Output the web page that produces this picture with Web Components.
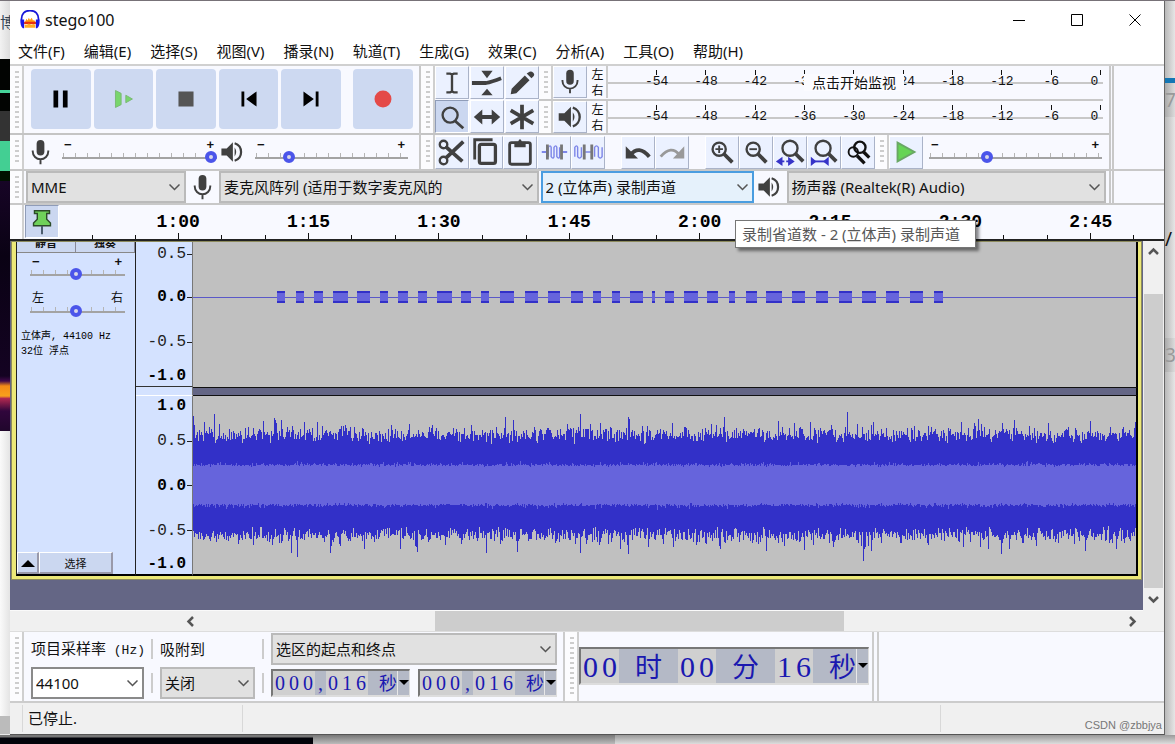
<!DOCTYPE html>
<html lang="zh-CN">
<head>
<meta charset="utf-8">
<title>stego100</title>
<style>
html,body{margin:0;height:100%}
body{font-family:"Noto Sans","Noto Sans CJK SC",sans-serif;font-size:15px;line-height:20px;color:#111}
</style>
</head>
<body>
<au-desktop>
  <au-window>
    <title-bar>stego100</title-bar>
    <menu-bar></menu-bar>
    <tool-dock></tool-dock>
    <time-ruler></time-ruler>
    <track-area></track-area>
    <selection-bar></selection-bar>
    <status-bar></status-bar>
  </au-window>
</au-desktop>
<script>
const define = (name, css, html, after) => {
  const t = document.createElement('template');
  t.innerHTML = `<style>*{box-sizing:border-box}:host{box-sizing:border-box}${css}</style>` + (typeof html === 'string' ? html : '');
  customElements.define(name, class extends HTMLElement {
    connectedCallback() {
      if (this.shadowRoot) return;
      const root = this.attachShadow({mode: 'open'});
      root.append(t.content.cloneNode(true));
      if (typeof html === 'function') {
        const f = document.createElement('template');
        f.innerHTML = html(this);
        root.append(f.content.cloneNode(true));
      }
      if (after) after(this, root);
    }
  });
};

/* Icons, drawn in a 34 x 34 box */
const D = '#404040';
const mic = `<rect x="13" y="4" width="8" height="16" rx="4" fill="${D}"/><path d="M9 15v1a8 8 0 0 0 16 0v-1M17 24v5" fill="none" stroke="${D}" stroke-width="2"/>`;
const speaker = `<path d="M5 13h6l7-7v22l-7-7H5z" fill="${D}"/><path d="M20 12q3.500 5 0 10z" fill="${D}"/><path d="M20 7a10.500 10.500 0 0 1 0 20" fill="none" stroke="${D}" stroke-width="2.500"/>`;
const lens = (x, y, r) => `<circle cx="${x}" cy="${y}" r="${r}" fill="none" stroke="${D}" stroke-width="2.500"/><path d="M${x + r * .7} ${y + r * .7}L${x + 14} ${y + 14}" stroke="${D}" stroke-width="4"/>`;
const ICONS = {
  pause: `<path d="M9 8h5v18H9zM19 8h5v18h-5z" fill="#000"/>`,
  play: `<path d="M9 8l6 3v12l-6 3z" fill="#78d66c" stroke="#7ab874"/><path d="M20 13l7 4-7 4z" fill="#78d66c" stroke="#7ab874"/>`,
  stop: `<path d="M9 9h16v16H9z" fill="#555"/>`,
  start: `<path d="M9 9h3v16H9zM25 9v16L14 17z" fill="#000"/>`,
  end: `<path d="M22 9h3v16h-3zM9 9v16l11-8z" fill="#000"/>`,
  record: `<circle cx="17" cy="17" r="9" fill="#e44a48"/>`,
  ibeam: `<path d="M11 7h4l2 1 2-1h4M11 27h4l2-1 2 1h4M17 8v18" fill="none" stroke="${D}" stroke-width="2.500"/>`,
  envelope: `<path d="M11 4h12l-6 8zM11 30h12l-6-7z" fill="${D}"/><path d="M1 17h15q6-1 16-5" fill="none" stroke="${D}" stroke-width="4"/>`,
  draw: `<path d="M5 29l1-6L20 9l5 5-14 14zM22 7l3-2q2-1 4 1t0 4l-2 2z" fill="${D}"/>`,
  zoom: `<circle cx="15" cy="15" r="8" fill="none" stroke="${D}" stroke-width="2.500"/><path d="M20 21l9 8" stroke="${D}" stroke-width="3"/>`,
  shift: `<path d="M3 17l9-8v6h10V9l9 8-9 8v-6H12v6z" fill="${D}"/>`,
  multi: `<path d="M17 4v26M5 10l24 14M29 10L5 24" stroke="${D}" stroke-width="4"/>`,
  mic, speaker,
  cut: `<circle cx="8" cy="9" r="4" fill="none" stroke="${D}" stroke-width="2.500"/><circle cx="8" cy="26" r="4" fill="none" stroke="${D}" stroke-width="2.500"/><path d="M10 11l18 16M11 23L29 6" stroke="${D}" stroke-width="4"/>`,
  copy: `<path d="M5 25V4h19" fill="none" stroke="${D}" stroke-width="3"/><rect x="10" y="9" width="17" height="20" rx="2" fill="none" stroke="${D}" stroke-width="3.500"/>`,
  paste: `<rect x="6" y="7" width="22" height="23" rx="2" fill="none" stroke="${D}" stroke-width="3"/><path d="M11 6h4q2-5 4 0h4v6H11z" fill="${D}"/>`,
  trim: `<path d="M4 17h6M25 17h6" stroke="#7d86e8" stroke-width="2"/><path d="M11 22V12q2-3 3 0v10q2 3 3 0V12q2-3 3 0v10q2 3 3 0V12" fill="none" stroke="#7d86e8" stroke-width="1.500"/><path d="M10 9v16M25 9v16" stroke="#777" stroke-width="3"/>`,
  silence: `<path d="M3 22V12q2-3 3 0v10q2 3 4 0V12M14 17h7M24 22V12q2-3 4 0v10q2 3 4 0V12" fill="none" stroke="#7d86e8" stroke-width="1.500"/><path d="M13 9v16M21 9v16" stroke="#777" stroke-width="3"/>`,
  undo: `<path d="M9 20Q18 9 29 22" fill="none" stroke="${D}" stroke-width="4"/><path d="M4 11v13h13z" fill="${D}"/>`,
  redo: `<path d="M5 22Q16 9 25 20" fill="none" stroke="#999" stroke-width="3"/><path d="M30 11v13H18z" fill="#999"/>`,
  zoomin: lens(14, 14, 7) + `<path d="M10 14h8M14 10v8" stroke="${D}" stroke-width="2"/>`,
  zoomout: lens(14, 14, 7) + `<path d="M10 14h8" stroke="${D}" stroke-width="2"/>`,
  fitsel: lens(17, 13, 8) + `<path d="M2 27l7-5v4h6v-4l7 5-7 5v-4H9v4z" fill="#3734c8"/><path d="M12 22v10" stroke="#eaf0ff" stroke-width="2"/>`,
  fitproj: lens(16, 13, 8) + `<path d="M4 27h16" stroke="#3734c8" stroke-width="2"/><path d="M3 22v10l6-5zM22 22v10l-6-5z" fill="#3734c8"/>`,
  toggle: `<circle cx="19" cy="12" r="6" fill="none" stroke="#111" stroke-width="2.500"/><circle cx="12" cy="17" r="5" fill="none" stroke="#111" stroke-width="2"/><path d="M23 17l6 6M16 21l8 8" stroke="#111" stroke-width="3.500"/>`,
  playat: `<path d="M8 7l18 10L8 27z" fill="#66d455" stroke="#69a765" stroke-width="2"/>`,
  pin: `<path d="M9 5h16v3h-3v6l4 4v3H8v-3l4-4V8H9z" fill="#6fd05a" stroke="#2c4a28" stroke-width="1.500"/><path d="M17 21v9" stroke="#456" stroke-width="2"/>`,
  logo: `<path d="M3 22C0 4 10 1 17 1s17 3 14 21" fill="none" stroke="#1717d8" stroke-width="3"/><path d="M7 24l4-9 2 3 2-5 2 4 3-4 2 5 2-1 4 7z" fill="#ff9b10"/><path d="M7 20h20v4H7z" fill="#e83010"/><path d="M8 30h18v-5l-3-1-4 1-4-2-3 2-4 0z" fill="#ffad22"/><path d="M1 16h6v15H5q-5-3-4-15zM33 16h-6v15h2q5-3 4-15z" fill="#1717e8"/>`
};
define('au-icon', `:host{display:block;width:34px;height:34px;flex:none}svg{display:block;width:100%;height:100%}`,
  el => `<svg viewBox="0 0 34 34" aria-hidden="true">${ICONS[el.getAttribute('name')]}</svg>`);

define('tool-grip', `:host{display:block;width:14px;flex:none;align-self:stretch;background:#fcfcfe;border-right:2px solid #cfcfcf;padding:5px 3px 5px 5px}
  i{display:block;height:100%;background:repeating-linear-gradient(#cdcdcd 0 2px,transparent 2px 5px)}`, `<i></i>`);

define('tool-button', `:host{display:block;width:34px;height:34px;flex:none}
  button{width:100%;height:100%;padding:0;border:1px solid #fff;border-right-color:#aab3c8;border-bottom-color:#aab3c8;background:#ebf1ff;display:flex;align-items:center;justify-content:center;overflow:hidden}
  au-icon{width:32px;height:32px}
  :host([on]) button{background:#cbd7f0;border-color:#8f9cb8 #fff #fff #8f9cb8}
  :host([big]){width:auto;flex:1;height:60px}:host([big]) button{background:#cdd9f1;border:0;border-radius:4px}`,
  el => `<button type="button" aria-label="${el.getAttribute('icon')}"><au-icon name="${el.getAttribute('icon')}"></au-icon></button>`);

define('au-slider', `:host{display:flex;flex-direction:column}
  div{display:flex;justify-content:space-between;font:bold 13px/12px "Liberation Sans","Noto Sans CJK SC",sans-serif;padding:0 3px 0 2px;height:12px}
  :host([cjk]) div{font:12px/12px "Noto Sans CJK SC",sans-serif;padding:0 2px;height:14px}
  input{appearance:none;-webkit-appearance:none;width:100%;height:12px;margin:0;background:
   linear-gradient(#a3a3a3,#a3a3a3) 0 6px/100% 2px no-repeat,
   repeating-linear-gradient(90deg,#b5b5b5 0 1px,transparent 1px 12px) 1px 2px/100% 5px no-repeat}
  input::-webkit-slider-thumb{-webkit-appearance:none;width:12px;height:12px;border-radius:50%;border:4px solid #4b55ea;background:#d8d8e8}`,
  el => `<div><span>${el.getAttribute('lo') || '−'}</span><span>${el.getAttribute('hi') || '+'}</span></div><input type="range" aria-label="${el.getAttribute('label')}" value="${el.getAttribute('value')}">`);

define('au-combo', `:host{display:block;position:relative;height:32px}
  select{appearance:none;-webkit-appearance:none;width:100%;height:100%;border:2px solid #bababa;border-radius:0;background:#e1e1e1;font:inherit;color:#111;padding:0 20px 1px 3px;overflow:hidden}
  svg{position:absolute;right:6px;top:50%;margin-top:-3px;width:11px;height:7px;pointer-events:none}
  :host([hot]) select{background:#e5f1fb;border-color:#4a9de0}
  :host([white]) select{background:#fff;border-color:#8a8a8a}`,
  el => `<select aria-label="${el.getAttribute('label')}"><option>${el.getAttribute('value')}</option></select><svg viewBox="0 0 11 7"><path d="M.5.500l5 5 5-5" fill="none" stroke="#555" stroke-width="1.500"/></svg>`);

define('au-desktop', `:host{display:grid;min-height:100vh;grid-template:1px 1fr 9px/10px minmax(0,1fr) 10px;background:#e9e9e9;overflow:hidden}
  .top{grid-column:1/4;background:#777278}
  .left,.right{overflow:hidden;display:flex;flex-direction:column;white-space:nowrap}
  .left i,.right i{display:block;flex:none}
  .left span{height:58px;flex:none;background:linear-gradient(90deg,#f2f2f2,#ddd);color:#345;padding-top:11px;line-height:20px}
  .spec{height:250px;background:linear-gradient(#170526,#0a0214 30%,#140322 78%,#40084a 80%,#f58b16 82%,#f8a01c 86%,#b02850 87%,#30063c 92%,#20062c)}
  .right{background:linear-gradient(90deg,#b9b9b9,#e6e6e6)}
  .right span{flex:none;color:#999;font-size:19px;line-height:34px;height:34px;background:linear-gradient(90deg,#aaa,#dcdcdc)}
  .bottom{grid-column:1/4;display:flex}
  .bottom i{display:block}
  .b1{width:313px;background:linear-gradient(#777 2px,#02030a 3px)}.b2{width:302px;background:linear-gradient(#777,#bbb)}.b3{flex:1;background:linear-gradient(#999,#ddd)}`,
  `<div class="top"></div>
   <div class="left"><span>博</span><i style="height:31px;background:#020402"></i><i style="height:3px;background:#46d49a"></i><i style="height:18px;background:#020402"></i><i style="height:30px;background:#333"></i><i style="height:30px;background:#43cf93"></i><i style="height:10px;background:#010"></i><i class="spec"></i><i style="height:285px;background:linear-gradient(90deg,#fafafa,#e4e4e4)"></i><i style="height:18px;background:#bbb"></i></div>
   <slot></slot>
   <div class="right"><i style="height:77px"></i><i style="height:5px;background:#1376b4"></i><span>7</span><i style="height:105px"></i><span style="background:none;color:#111">/</span><i style="height:82px"></i><span>38</span></div>
   <div class="bottom"><i class="b1"></i><i class="b2"></i><i class="b3"></i></div>`);

define('au-window', `:host{display:flex;flex-direction:column;min-width:0;background:#f8f9ff;border-right:1px solid #666;border-bottom:1px solid #555}`, `<slot></slot>`);

define('title-bar', `:host{display:flex;height:38px;background:#fff;align-items:center;font-size:16px;padding-left:10px}
  au-icon{width:20px;height:20px}.t{flex:1;padding-left:5px}
  button{width:58px;height:38px;border:0;background:none;padding:0;display:grid;place-items:center}svg{display:block}`,
  `<au-icon name="logo"></au-icon><span class="t"><slot></slot></span>
   <button aria-label="最小化"><svg width="14" height="14"><path d="M1 7.500h12" stroke="#000"/></svg></button>
   <button aria-label="最大化"><svg width="14" height="14"><path d="M1.500 1.500h11v11h-11z" fill="none" stroke="#000"/></svg></button>
   <button aria-label="关闭"><svg width="14" height="14"><path d="M1.500 1.500l11 11M12.500 1.500l-11 11" stroke="#000"/></svg></button>`);

define('menu-bar', `:host{display:flex;height:25px;background:#fff;padding:0 0 2px 8px;gap:19px;align-items:center}
  a{color:#111;text-decoration:none;line-height:22px;white-space:nowrap}`,
  () => '文件(F) 编辑(E) 选择(S) 视图(V) 播录(N) 轨道(T) 生成(G) 效果(C) 分析(A) 工具(O) 帮助(H)'.split(' ').map(m => `<a href="#">${m}</a>`).join(''));

define('level-meter', `:host{display:flex;height:32px;min-width:0;align-items:stretch}
  tool-button{margin-right:2px;height:32px}
  .lr{width:17px;font:12px/16px "Noto Sans CJK SC",sans-serif;text-align:center}
  .lr div{height:16px}
  .scale{position:relative;flex:1;min-width:0;border-left:2px solid #ccc;display:flex;
    background:linear-gradient(#c8c8c8,#c8c8c8) 0 16px/100% 2px no-repeat;padding:4px 2px 0 24px}
  .scale span{flex:1;text-align:center;font:13px/14px "Liberation Mono",monospace;min-width:0;
    background:linear-gradient(#111,#111) 50% 0/1px 5px no-repeat;padding-top:5px}
  .scale span:last-of-type{flex:0 0 13px;margin-left:12px;background-position:right 0}
  button{position:absolute;left:calc(40% - 2px);top:8px;height:17px;width:100px;padding:0;border:0;background:#fbfbff;font:14px/17px "Noto Sans CJK SC",sans-serif;color:#111}`,
  el => `<tool-button icon="${el.getAttribute('icon')}"></tool-button><div class="lr"><div>左</div><div>右</div></div><div class="scale">${[-54,-48,-42,-36,-30,-24,-18,-12,-6,0].map(n => `<span>${n}</span>`).join('')}${el.hasAttribute('idle') ? '<button>点击开始监视</button>' : ''}</div>`);

const btn = names => names.split(' ').map(n => `<tool-button icon="${n}"></tool-button>`).join('');
define('tool-dock', `:host{display:block;border-top:2px solid #d0d0d0}
  .top{display:flex}
  .left{width:411px;flex:none;border-right:2px solid #c8c8c8}
  .row{display:flex}
  .transport{height:69px;border-bottom:2px solid #c4c4c4}
  .keys{display:flex;gap:3px;width:310px;margin:3px 0 0 7px}
  .rec{display:flex;width:60px;margin:3px 0 0 12px}
  .mixer{height:34px;align-items:center}
  .mic{width:33px;height:33px}
  .spk{width:30px;height:30px}
  .mixer au-slider{margin-bottom:2px}
  .right{flex:1;min-width:0;display:flex}
  .main{flex:1;min-width:0;max-width:800px}
  .up{display:flex;height:69px;border-bottom:2px solid #c4c4c4}
  .tools{display:grid;grid-template-columns:repeat(3,34px);grid-auto-rows:33px;gap:1px;flex:none}
  .tools tool-button{height:33px}
  .meters{flex:1;min-width:0;margin:0 6px 0 0}
  .meters>div{display:flex;height:33px}
  .meters>div+div{border-top:2px solid #c8c8c8;height:34px}
  .meters level-meter{flex:1}
  .edit{display:flex;height:34px;align-items:center}
  .edit tool-button{height:33px}
  .gap{width:16px}
  .dev{display:flex;height:36px;border-top:2px solid #c8c8c8;border-bottom:2px solid #c8c8c8;align-items:center}
  .end{border-left:2px solid #c8c8c8;border-right:2px solid #c8c8c8;width:5px;align-self:stretch;flex:none}
  .blank{width:50px;flex:none}`,
  `<div class="top"><div class="left">
    <div class="row transport"><tool-grip></tool-grip><div class="keys">
     ${['pause','play','stop','start','end'].map(n => `<tool-button big icon="${n}"></tool-button>`).join('')}</div>
     <div class="rec"><tool-button big icon="record"></tool-button></div></div>
    <div class="row mixer"><tool-grip></tool-grip><au-icon class="mic" name="mic" style="margin-right:5px"></au-icon>
     <au-slider label="录音音量" value="100" style="width:155px"></au-slider><au-icon class="spk" name="speaker" style="margin-right:8px"></au-icon>
     <au-slider label="播放音量" value="20" style="width:153px"></au-slider></div>
   </div>
   <div class="right"><div class="main">
    <div class="up"><tool-grip></tool-grip><div class="tools">
      <tool-button icon="ibeam"></tool-button><tool-button icon="envelope"></tool-button><tool-button icon="draw"></tool-button>
      <tool-button icon="zoom" on></tool-button><tool-button icon="shift"></tool-button><tool-button icon="multi"></tool-button></div>
      <div class="meters"><div><tool-grip></tool-grip><level-meter icon="mic" idle></level-meter></div>
      <div><tool-grip></tool-grip><level-meter icon="speaker"></level-meter></div></div></div>
    <div class="edit"><tool-grip></tool-grip>${btn('cut copy paste trim silence')}<span class="gap"></span>${btn('undo redo')}<span class="gap"></span>${btn('zoomin zoomout fitsel fitproj toggle')}
      <tool-grip></tool-grip>${btn('playat')}<au-slider label="播放速度" value="32" style="width:173px;margin:0 0 2px 6px"></au-slider></div>
   </div><span class="end" style="margin-left:auto"></span><span class="blank"></span></div></div>
   <div class="dev"><tool-grip></tool-grip>
    <au-combo label="音频主机" value="MME" style="width:160px;margin-left:2px"></au-combo><au-icon class="mic" name="mic"></au-icon>
    <au-combo label="录制设备" value="麦克风阵列 (适用于数字麦克风的" style="flex:1"></au-combo>
    <au-combo hot label="录制声道" value="2 (立体声) 录制声道" style="width:213px;margin-left:2px"></au-combo><au-icon class="spk" name="speaker" style="margin-right:3px"></au-icon>
    <au-combo label="播放设备" value="扬声器 (Realtek(R) Audio)" style="flex:1;margin-right:3px"></au-combo>
    <span class="end"></span><span class="blank"></span></div>`);

define('time-ruler', `:host{display:flex;height:36px;position:relative;border-bottom:2px solid #222}
  .stub{width:14px;border-right:2px solid #d0d0d0;background:#fcfcfe}
  tool-button{margin-left:1px;height:33px}
  .lead{width:54px;background:linear-gradient(#111,#111) 33px 100%/1px 4px no-repeat}
  ol{flex:1;display:flex;margin:0 8px 0 0;padding:0;list-style:none}
  li{flex:1;text-align:center;font:bold 18px/34px "Liberation Mono",monospace;color:#000;
   background:linear-gradient(#111,#111) 50% 100%/1px 6px no-repeat,linear-gradient(#111,#111) 16.667% 100%/1px 4px no-repeat,linear-gradient(#111,#111) 83.333% 100%/1px 4px no-repeat}
  .tip{position:absolute;left:725px;top:15px;z-index:5;border:1px solid #767676;background:#fff;color:#575757;padding:1px 6px;min-width:241px;line-height:24px;box-shadow:3px 3px 3px #0007;white-space:nowrap}`,
  `<span class="stub"></span><tool-button icon="pin" on></tool-button><span class="lead"></span>
   <ol>${['1:00','1:15','1:30','1:45','2:00','2:15','2:30','2:45'].map(t => `<li>${t}</li>`).join('')}</ol>
   <div class="tip" role="tooltip">录制省道数 - 2 (立体声) 录制声道</div>`);

/* Amplitude scale: "rows" are the grid rows, the labels stand in the even ones */
define('amp-scale', `:host{display:grid;background:#d4e2ff;font:16px/20px "Liberation Mono",monospace;color:#222;border-bottom:1px solid #333}
  div{display:flex;justify-content:flex-end;align-items:center;gap:1px;height:20px}
  div::after{content:"";width:5px;height:1px;background:#222}
  .b{font-weight:bold;color:#000}.e::after{background:none}`,
  el => el.getAttribute('labels').split(' ').map((l, i) => `<div style="grid-row:${2 * i + 2}" class="${/^-?[01]\.0$/.test(l) ? 'b' : ''} ${/1\.0/.test(l) ? 'e' : ''}">${l}</div>`).join(''),
  el => { el.style.gridTemplateRows = el.getAttribute('rows'); });

/* Pseudo-random noise with a fixed seed, so that each drawing is the same */
const noise = seed => () => (seed = (seed * 1664525 + 1013904223) >>> 0) / 4294967296;
function noisePath(base, jitter, spike, seed, peaks) {
  const r = noise(seed);
  const up = [], down = [];
  for (let x = 0; x < 944; x++) {
    const v = () => base + (r() + r() - 1) * jitter + (r() < .13 ? r() * spike : 0);
    up.push(peaks && peaks.up[x] || v());
    down.push(peaks && peaks.down[x] || v());
  }
  let d = `M0 ${Math.round(89 - up[0])}`;
  up.forEach((v, x) => d += `V${Math.round(89 - v)}H${x + 1}`);
  for (let x = 943; x >= 0; x--) d += `V${Math.round(89 + down[x])}H${x}`;
  return d + 'z';
}
const BEEPS = [[277,8],[296,8],[314,9],[333,15],[357,13],[380,8],[398,10],[418,9],[437,15],[461,10],[481,8],[500,14],[525,13],[548,12],[571,12],[593,8],[612,8],[630,13],[652,3],[665,10],[685,14],[708,11],[730,6],[747,11],[767,16],[793,13],[817,12],[840,13],[863,14],[887,13],[911,13],[935,9]];
define('wave-channel', `:host{display:block;background:#c0c0c0;min-height:0}svg{display:block;width:100%;height:100%}`,
  el => el.getAttribute('kind') === 'beeps'
    ? `<svg viewBox="0 0 944 146" preserveAspectRatio="none" shape-rendering="crispEdges"><path d="M0 56h944v1H0z" fill="#5a58c8"/>${BEEPS.map(([x, w]) => `<path d="M${x - 193} 50h${w}v12h-${w}z" fill="#3230c8"/><path d="M${x - 193} 52h${w}v8h-${w}z" fill="#6664dc"/>`).join('')}</svg>`
    : `<svg viewBox="0 0 944 178" preserveAspectRatio="none" shape-rendering="crispEdges"><path fill="#3230c8" d="${noisePath(50, 9, 14, 77, {up: {0: 69, 1: 60, 81: 67, 82: 65, 83: 62, 435: 68, 436: 66, 655: 73, 898: 64}, down: {671: 76, 672: 64, 324: 67, 207: 64}})}"/><path fill="#6664dc" d="${noisePath(20, 2, 3, 9)}"/></svg>`);

define('au-scroll', `:host{display:flex;background:#f0f0f0;align-items:center}
  :host([vertical]){flex-direction:column;width:21px}
  button{border:0;padding:0;background:none;width:21px;height:21px;flex:none;display:grid;place-items:center}
  svg{display:block}
  .r{flex:1;display:flex;align-self:stretch;min-height:0}
  :host([vertical]) .r{flex-direction:column;padding:0 1px}
  i{background:#cdcdcd;display:block}`,
  el => {
    const v = el.hasAttribute('vertical');
    const [a, b, c] = el.getAttribute('parts').split(' ');
    const arrow = p => `<button aria-label="滚动"><svg width="11" height="11"><path d="${p}" fill="none" stroke="#555" stroke-width="2.500"/></svg></button>`;
    return arrow(v ? 'M1 8l4.500-4.500L10 8' : 'M8 1L3.500 5.500 8 10') + `<div class="r"><span style="flex:${a}"></span><i style="flex:${b}"></i><span style="flex:${c}"></span></div>` + arrow(v ? 'M1 3l4.500 4.500L10 3' : 'M3 1l4.500 4.500L3 10');
  });

define('track-panel', `:host{display:flex;flex-direction:column;background:#d4e2ff;border-right:1px solid #222}
  .mute{display:flex;height:12px;flex:none;overflow:hidden;align-items:flex-end;border-bottom:1px solid #888}
  .mute button{flex:1;height:20px;border:0;border-right:1px solid #889;background:#cbd7f0;padding:0;font:bold 11px/14px "Noto Sans CJK SC",sans-serif;color:#111}
  au-slider{width:95px;margin:3px 0 0 13px}
  au-slider+au-slider{margin-top:11px}
  p{margin:12px 4px 0;font:10px/15px "Liberation Mono","Noto Sans CJK SC",monospace;color:#000;white-space:nowrap}
  .foot{margin-top:auto;display:flex;height:22px}
  .foot button{height:22px;border:1px solid #fff;border-right:2px solid #99a;border-bottom:2px solid #99a;background:#cbd7f0;padding:0;width:74px;font:11px/16px "Noto Sans CJK SC",sans-serif;color:#111}
  .foot button:first-child{width:22px;display:grid;place-items:center}`,
  `<div class="mute"><button>静音</button><button>独奏</button></div>
   <au-slider label="增益" value="48"></au-slider><au-slider cjk label="声像" lo="左" hi="右" value="48"></au-slider>
   <p>立体声, 44100 Hz<br>32位 浮点</p>
   <div class="foot"><button aria-label="折叠"><svg width="14" height="8"><path d="M0 8l7-7 7 7z"/></svg></button><button>选择</button></div>`);

define('track-area', `:host{flex:1;min-height:0;display:grid;grid-template:minmax(0,1fr) 22px/minmax(0,1fr) 21px}
  .canvas{background:#646685;padding-bottom:30px;display:flex}
  .track{flex:1;min-width:0;display:grid;grid-template:146px 9px minmax(0,1fr)/120px 57px minmax(0,1fr);border:solid #ece878;border-width:0 4px 4px 5px;outline:1px solid #8c8a5c;outline-offset:-1px;margin:0 1px 0 1px}
  track-panel{grid-row:1/4}
  .sep1{background:#d4e2ff;border-bottom:1px solid #fff}
  .sep2{background:#646685;border:solid #111;border-width:1px 0}
  .track>*{min-width:0;min-height:0}
  wave-channel,.sep2{border-right:2px solid #000}
  wave-channel.last,amp-scale.last,track-panel{border-bottom:2px solid #000}
  track-panel{border-left:1px solid #222}
  .sc{border-right:1px solid #777}
  .hs{padding-left:170px;background:#f0f0f0;display:flex;border-top:1px solid #fafafa;border-bottom:1px solid #ddd}
  .hs au-scroll{flex:1}
  .corner{background:#f0f0f0;border-bottom:1px solid #ddd}`,
  `<div class="canvas"><div class="track">
     <track-panel></track-panel>
     <amp-scale class="sc" rows="3fr 20px 23fr 20px 25fr 20px 14fr 20px" labels="0.5 0.0 -0.5 -1.0"></amp-scale>
     <wave-channel kind="beeps"></wave-channel>
     <div class="sep1 sc"></div><div class="sep2"></div>
     <amp-scale class="sc last" rows="0 20px 15fr 20px 24fr 20px 25fr 20px 13fr 20px" labels="1.0 0.5 0.0 -0.5 -1.0"></amp-scale>
     <wave-channel class="last" kind="noise"></wave-channel>
   </div></div>
   <au-scroll vertical parts="32 294 1"></au-scroll>
   <div class="hs"><au-scroll parts="234 410 278"></au-scroll></div><div class="corner"></div>`);

define('time-field', `:host{display:inline-flex;height:28px;border:2px solid #777;border-right:1px solid #ddd;border-bottom:2px solid #ddd;background:#b4b9c6;color:#1a18b0;--d:14px;--u:18px;--s:11px;font:20px/25px "Liberation Serif",serif;width:max-content}
  span{display:block;text-align:center;flex:none;overflow:visible}
  .d{width:var(--d);background:#d0d0d0}.u{width:var(--u);font-family:"Noto Sans CJK SC",sans-serif;font-size:18px;line-height:22px}.s{width:var(--s)}
  button{border:0;border-left:1px solid #e8e8e8;padding:0;background:none;width:12px;display:grid;place-items:center}
  :host([big]){height:38px;--d:19px;--u:27px;--s:16px;font-size:30px;line-height:36px}
  :host([big]) .u{font-size:27px;line-height:34px}`,
  el => [...el.getAttribute('value')].map(c => `<span class="${/\d/.test(c) ? 'd' : /[, ]/.test(c) ? 's' : 'u'}">${c === ' ' ? '&nbsp;' : c}</span>`).join('') + `<button aria-label="格式"><svg width="10" height="6"><path d="M0 0h10L5 5z"/></svg></button>`);

define('selection-bar', `:host{display:flex;height:71px;border-bottom:2px solid #ccc;background:#f8f9ff}
  .g{display:grid;grid-template:32px 36px/113px 16px 95px 16px auto;padding:1px 0 0 7px;align-items:center;height:69px}
  .g i{width:2px;height:20px;background:#ccc;justify-self:center}
  label{line-height:20px;white-space:nowrap}
  label span{font:13px/20px "Liberation Mono",monospace}
  .times{display:flex;gap:8px}
  .a{width:8px;border-right:2px solid #ccc}
  .b{display:flex;align-items:center;padding:0 3px 1px 0;border-right:2px solid #ccc}
  .c{width:5px;border-right:2px solid #ccc}`,
  `<tool-grip></tool-grip><div class="g">
    <label>项目采样率<span> (Hz)</span></label><i></i><label>吸附到</label><i></i>
    <au-combo label="选区" value="选区的起点和终点"></au-combo>
    <au-combo white label="项目采样率" value="44100"></au-combo><i></i><au-combo label="吸附到" value="关闭"></au-combo><i></i>
    <div class="times"><time-field value="000,016 秒"></time-field><time-field value="000,016 秒"></time-field></div></div>
   <span class="a"></span><tool-grip></tool-grip><div class="b"><time-field big value="00 时 00 分 16 秒"></time-field></div><span class="c"></span>`);

define('status-bar', `:host{display:flex;height:31px;background:#f0f0f0;padding:2px 2px 2px 12px;align-items:center}
  div{border-left:1px solid #d8d8d8;height:27px;line-height:26px;padding-left:5px}
  .m{width:220px}.f{flex:1}
  .w{width:222px;display:flex;justify-content:flex-end;align-items:flex-end;font:11px/13px "Liberation Sans",sans-serif;color:#777}`,
  `<div class="m">已停止.</div><div class="f"></div><div class="w">CSDN @zbbjya</div>`);
</script>
</body>
</html>
